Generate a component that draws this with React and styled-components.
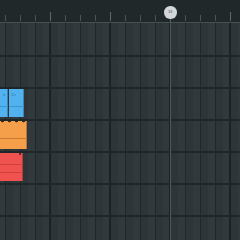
import styled, { createGlobalStyle } from "styled-components";

const GlobalStyle = createGlobalStyle`
  html, body {
    margin: 0;
    padding: 0;
    background: #2c3437;
    font-family: "Liberation Sans", Arial, sans-serif;
  }
`;

const Screen = styled.div`
  position: relative;
  width: 240px;
  height: 240px;
  overflow: hidden;
  display: flex;
  flex-direction: column;
  background: #2c3437;
`;

const Ruler = styled.div`
  height: 22px;
  flex: none;
  display: flex;
  align-items: flex-end;
  padding-left: 5px;
  background: #212829;
  border-bottom: 1px solid #465053;
`;

const TickSlot = styled.div`
  flex: none;
  width: 15px;
  height: 100%;
  display: flex;
  align-items: flex-end;
`;

const Tick = styled.span`
  width: 1px;
  height: ${(p) => (p.$bar ? "9px" : "6px")};
  margin-bottom: 1px;
  background: ${(p) => (p.$bar ? "#5f686b" : "#4a5356")};
`;

const Grid = styled.div`
  flex: 1;
  display: flex;
  flex-direction: column;
  background-color: #2d3538;
  background-image:
    linear-gradient(to right, #1c2224 0 2px, transparent 2px),
    linear-gradient(to right, #20272a 0 1.5px, transparent 1.5px),
    linear-gradient(to right, rgba(255, 255, 255, 0.018) 0 7px, transparent 7px);
  background-size: 60px 100%, 15px 100%, 15px 100%;
  background-position: 49px 0, 5px 0, 13px 0;
`;

const Row = styled.div`
  flex: none;
  box-sizing: border-box;
  height: 32px;
  border-top: ${(p) => (p.$first ? "none" : "2px solid #1f2628")};
  display: flex;
  align-items: flex-start;
  gap: 1px;
`;

const Clip = styled.div`
  position: relative;
  flex: none;
  width: ${(p) => p.$w}px;
  height: 28px;
  background: ${(p) => p.$color};
  box-shadow: inset -1px 0 0 rgba(0, 0, 0, 0.25);
  display: flex;
  flex-direction: column;
`;

const ClipName = styled.span`
  height: 18px;
  padding: 3px 0 0 3px;
  box-sizing: border-box;
  font-size: 4px;
  line-height: 5px;
  color: rgba(20, 60, 95, 0.6);
  border-bottom: 1px solid ${(p) => p.$line};
  white-space: nowrap;
  overflow: hidden;
`;

const Stripe = styled.span`
  height: 1px;
  margin-top: ${(p) => p.$top}px;
  background: ${(p) => p.$line};
`;

const Notches = styled.div`
  position: absolute;
  top: 0;
  left: 0;
  right: 0;
  height: 2px;
  background-image: radial-gradient(circle at 50% 0, #3a2a1a 0 1.3px, transparent 1.6px);
  background-size: 7px 2px;
  background-position: -1px 0;
`;

const Dot = styled.span`
  position: absolute;
  top: 0;
  right: 2px;
  width: 2px;
  height: 2px;
  border-radius: 50%;
  background: #3a1e1e;
`;

const PlayheadLine = styled.div`
  position: absolute;
  top: 12px;
  bottom: 0;
  left: 169.5px;
  width: 1px;
  background: #56606a;
  opacity: 0.85;
`;

const PlayheadKnob = styled.div`
  position: absolute;
  top: 6px;
  left: 164px;
  width: 12.5px;
  height: 12.5px;
  border-radius: 50%;
  background: #d3d7d9;
  display: flex;
  align-items: center;
  justify-content: center;
  font-size: 3.5px;
  color: #6a7377;
  font-weight: bold;
`;

const ticks = Array.from({ length: 16 }, (_, i) => i);

export default function App() {
  return (
    <>
      <GlobalStyle />
      <Screen>
        <Ruler>
          {ticks.map((i) => (
            <TickSlot key={i}>
              <Tick $bar={i % 4 === 3} />
            </TickSlot>
          ))}
        </Ruler>
        <Grid>
          <Row $first />
          <Row />
          <Row>
            <Clip $w={7.5} $color="#52b2ef">
              <ClipName $line="#3f94cc">o</ClipName>
            </Clip>
            <Clip $w={15.5} $color="#52b2ef">
              <ClipName $line="#3f94cc">Dr</ClipName>
            </Clip>
          </Row>
          <Row>
            <Clip $w={27} $color="#f59f4b">
              <Notches />
              <Stripe $top={17} $line="#c97a33" />
            </Clip>
          </Row>
          <Row>
            <Clip $w={23} $color="#f0524f">
              <Dot />
              <Stripe $top={11} $line="#c94240" />
              <Stripe $top={7} $line="#c94240" />
            </Clip>
          </Row>
          <Row />
          <Row />
        </Grid>
        <PlayheadLine />
        <PlayheadKnob>33</PlayheadKnob>
      </Screen>
    </>
  );
}
